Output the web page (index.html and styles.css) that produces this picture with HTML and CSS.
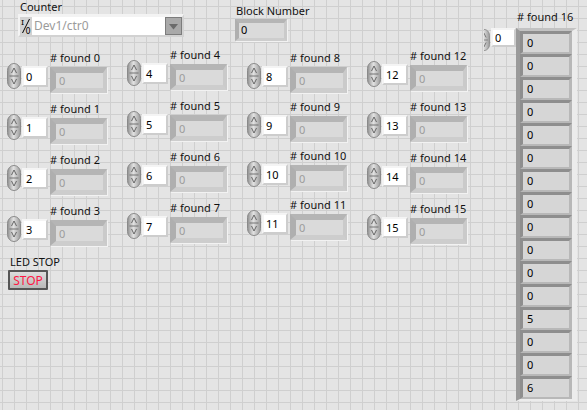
FILE: index.html
```html
<!DOCTYPE html>
<html>
<head>
<meta charset="utf-8">
<title>Front Panel</title>
<link rel="stylesheet" href="styles.css">
</head>
<body>
<svg class="defs" width="0" height="0">
  <defs>
    <linearGradient id="spg" x1="0" y1="0" x2="1" y2="0">
      <stop offset="0" stop-color="#8f8f8f"/>
      <stop offset="0.45" stop-color="#e2e2e2"/>
      <stop offset="1" stop-color="#9a9a9a"/>
    </linearGradient>
    <symbol id="spin" viewBox="0 0 14 26">
      <rect x="0.5" y="0.5" width="13" height="25" rx="6.5" ry="7" fill="url(#spg)" stroke="#8a8a8a"/>
      <polyline points="4.5,10 7,5 9.5,10" fill="none" stroke="#5a5a5a" stroke-width="0.9"/>
      <line x1="2.5" y1="13" x2="11.5" y2="13" stroke="#6a6a6a" stroke-width="0.9"/>
      <polyline points="4.5,16 7,21 9.5,16" fill="none" stroke="#5a5a5a" stroke-width="0.9"/>
    </symbol>
  </defs>
</svg>
<div class="panel">
  <div class="left">
    <div class="top">
      <div class="counter">
        <div class="lbl counter-lbl">Counter</div>
        <div class="ioctl">
          <div class="io-icon">
            <svg width="12" height="18" viewBox="0 0 12 18">
              <text x="1" y="8" class="io-i">I</text>
              <line x1="9.5" y1="2" x2="2.5" y2="16" stroke="#000" stroke-width="1"/>
              <text x="5.5" y="16.5" class="io-o">0</text>
            </svg>
          </div>
          <div class="io-field">Dev1/ctr0</div>
          <div class="io-drop">
            <svg width="13" height="13" viewBox="0 0 13 13"><polygon points="2,4 11,4 6.5,9.5" fill="#6b6b6b"/></svg>
          </div>
        </div>
      </div>
      <div class="block">
        <div class="lbl">Block Number</div>
        <div class="ind ind-small">0</div>
      </div>
    </div>

    <div class="cluster">
      <div class="col c1">
        <div class="unit"><div class="ctl"><svg class="spin"><use href="#spin"/></svg><div class="num">0</div></div><div class="indw"><div class="lbl"># found 0</div><div class="ind">0</div></div></div>
        <div class="unit"><div class="ctl"><svg class="spin"><use href="#spin"/></svg><div class="num">1</div></div><div class="indw"><div class="lbl"># found 1</div><div class="ind">0</div></div></div>
        <div class="unit"><div class="ctl"><svg class="spin"><use href="#spin"/></svg><div class="num">2</div></div><div class="indw"><div class="lbl"># found 2</div><div class="ind">0</div></div></div>
        <div class="unit"><div class="ctl"><svg class="spin"><use href="#spin"/></svg><div class="num">3</div></div><div class="indw"><div class="lbl"># found 3</div><div class="ind">0</div></div></div>
      </div>
      <div class="col c2">
        <div class="unit"><div class="ctl"><svg class="spin"><use href="#spin"/></svg><div class="num">4</div></div><div class="indw"><div class="lbl"># found 4</div><div class="ind">0</div></div></div>
        <div class="unit"><div class="ctl"><svg class="spin"><use href="#spin"/></svg><div class="num">5</div></div><div class="indw"><div class="lbl"># found 5</div><div class="ind">0</div></div></div>
        <div class="unit"><div class="ctl"><svg class="spin"><use href="#spin"/></svg><div class="num">6</div></div><div class="indw"><div class="lbl"># found 6</div><div class="ind">0</div></div></div>
        <div class="unit"><div class="ctl"><svg class="spin"><use href="#spin"/></svg><div class="num">7</div></div><div class="indw"><div class="lbl"># found 7</div><div class="ind">0</div></div></div>
      </div>
      <div class="col c3">
        <div class="unit"><div class="ctl"><svg class="spin"><use href="#spin"/></svg><div class="num">8</div></div><div class="indw"><div class="lbl"># found 8</div><div class="ind">0</div></div></div>
        <div class="unit"><div class="ctl"><svg class="spin"><use href="#spin"/></svg><div class="num">9</div></div><div class="indw"><div class="lbl"># found 9</div><div class="ind">0</div></div></div>
        <div class="unit"><div class="ctl"><svg class="spin"><use href="#spin"/></svg><div class="num">10</div></div><div class="indw"><div class="lbl"># found 10</div><div class="ind">0</div></div></div>
        <div class="unit"><div class="ctl"><svg class="spin"><use href="#spin"/></svg><div class="num">11</div></div><div class="indw"><div class="lbl"># found 11</div><div class="ind">0</div></div></div>
      </div>
      <div class="col c4">
        <div class="unit"><div class="ctl"><svg class="spin"><use href="#spin"/></svg><div class="num">12</div></div><div class="indw"><div class="lbl"># found 12</div><div class="ind">0</div></div></div>
        <div class="unit"><div class="ctl"><svg class="spin"><use href="#spin"/></svg><div class="num">13</div></div><div class="indw"><div class="lbl"># found 13</div><div class="ind">0</div></div></div>
        <div class="unit"><div class="ctl"><svg class="spin"><use href="#spin"/></svg><div class="num">14</div></div><div class="indw"><div class="lbl"># found 14</div><div class="ind">0</div></div></div>
        <div class="unit"><div class="ctl"><svg class="spin"><use href="#spin"/></svg><div class="num">15</div></div><div class="indw"><div class="lbl"># found 15</div><div class="ind">0</div></div></div>
      </div>
    </div>

    <div class="led">
      <div class="lbl led-lbl">LED STOP</div>
      <button class="stop">STOP</button>
    </div>
  </div>

  <div class="right">
    <div class="lbl arr-lbl"># found 16</div>
    <div class="arow">
      <div class="idx">
        <svg class="spin idx-spin"><use href="#spin"/></svg>
        <div class="num idx-num">0</div>
      </div>
      <div class="array">
        <div class="el">0</div>
        <div class="el">0</div>
        <div class="el">0</div>
        <div class="el">0</div>
        <div class="el">0</div>
        <div class="el">0</div>
        <div class="el">0</div>
        <div class="el">0</div>
        <div class="el">0</div>
        <div class="el">0</div>
        <div class="el">0</div>
        <div class="el">0</div>
        <div class="el">5</div>
        <div class="el">0</div>
        <div class="el">0</div>
        <div class="el">6</div>
      </div>
    </div>
  </div>
</div>
</body>
</html>
```

FILE: styles.css
```css
* { box-sizing: border-box; }
html, body { margin: 0; padding: 0; }
body {
  width: 587px;
  height: 410px;
  overflow: hidden;
  font-family: "Noto Sans", "DejaVu Sans", sans-serif;
  font-size: 11px;
  color: #000;
}
.defs { position: absolute; width: 0; height: 0; overflow: hidden; }

.panel {
  width: 587px;
  height: 410px;
  display: flex;
  background-color: #e4e4e4;
  background-image:
    linear-gradient(to right, #cfcfcf 1px, transparent 1px),
    linear-gradient(to bottom, #cfcfcf 1px, transparent 1px);
  background-size: 12px 12px;
  background-position: 2px 6px;
}

.lbl {
  font-size: 11px;
  line-height: 13px;
  height: 13px;
  white-space: nowrap;
  color: #111;
}

.left { width: 480px; display: flex; flex-direction: column; }

/* top row */
.top { height: 40px; display: flex; align-items: flex-start; }
.counter { margin-left: 18px; display: flex; flex-direction: column; }
.counter-lbl { margin-left: 2px; }
.ioctl {
  margin-top: 1px;
  width: 166px;
  height: 23px;
  display: flex;
  border-style: solid;
  border-width: 3px 2px 2px 2px;
  border-color: #f3f3f3 #d2d2d2 #d2d2d2 #f3f3f3;
}
.io-icon { width: 12px; background: #d2d2d2; }
.io-icon svg { display: block; }
.io-i { font-family: "DejaVu Serif", serif; font-size: 8px; fill: #000; }
.io-o { font-family: "DejaVu Sans", sans-serif; font-size: 8px; fill: #000; }
.io-field {
  flex: 1;
  background: #fff;
  color: #9b9b9b;
  font-size: 12px;
  line-height: 18px;
  padding-left: 2px;
  white-space: nowrap;
}
.io-drop {
  width: 17px;
  background: #a9a9a9;
  border: 1px solid #7c7c7c;
  display: flex;
  align-items: center;
  justify-content: center;
}
.block { margin-left: 51px; padding-top: 4px; display: flex; flex-direction: column; }
.block .lbl { margin-left: 1px; }

/* indicators */
.ind {
  width: 57px;
  height: 26px;
  border-style: solid;
  border-width: 6px 4px 5px 6px;
  border-color: #b5b5b5 #cacaca #cdcdcd #afafaf;
  background: #dadada;
  color: #9c9c9c;
  font-size: 11px;
  line-height: 14px;
  padding: 1px 0 0 3px;
  box-shadow: 1px 1px 0 #f2f2f2;
}
.ind-small {
  margin-top: 2px;
  width: 52px;
  height: 22px;
  border-width: 4px 3px 3px 4px;
  color: #000;
  padding: 0 0 0 2px;
}

/* cluster of controls */
.cluster {
  display: grid;
  grid-template-columns: repeat(4, 120px);
  margin-left: 7px;
  height: 215px;
}
.col { display: flex; flex-direction: column; }
.c1 { padding-top: 11px; gap: 2px; }
.c2 { padding-top: 8px; gap: 2px; }
.c3 { padding-top: 11px; gap: 0; }
.c4 { padding-top: 9px; gap: 2px; }
.unit { height: 49px; display: flex; align-items: flex-start; }
.ctl { margin-top: 12px; display: flex; align-items: flex-start; }
.spin { width: 14px; height: 26px; display: block; flex: none; }
.num {
  margin-left: 1px;
  margin-top: 3px;
  width: 26px;
  height: 21px;
  border-style: solid;
  border-width: 2px;
  border-color: #f4f4f4 #cdcdcd #cdcdcd #f4f4f4;
  background: #fff;
  background-clip: padding-box;
  font-size: 11px;
  line-height: 16px;
  padding: 1px 0 0 2px;
}
.indw { margin-left: 2px; display: flex; flex-direction: column; }
.indw .ind { margin-top: 3px; }

/* LED STOP */
.led { margin-left: 8px; display: flex; flex-direction: column; align-items: flex-start; }
.led-lbl { margin-left: 2px; }
.stop {
  margin-top: 2px;
  width: 40px;
  height: 20px;
  padding: 0;
  border: 2px solid #555;
  border-radius: 1px;
  background: linear-gradient(#dcdcdc, #b8b8b8);
  color: #ff1744;
  font-family: "Noto Sans", "DejaVu Sans", sans-serif;
  font-size: 12px;
  line-height: 15px;
}

/* array */
.right { width: 107px; padding-top: 10px; display: flex; flex-direction: column; }
.arr-lbl { margin-left: 37px; }
.arow { margin-top: 5px; display: flex; align-items: flex-start; }
.idx { margin-left: 4px; width: 32px; height: 26px; overflow: hidden; display: flex; align-items: flex-start; flex: none; }
.idx-spin { margin-left: -7px; width: 14px; height: 22px; margin-top: 1px; }
.idx-num { margin-left: 0; margin-top: 0; width: 25px; height: 19px; line-height: 14px; }
.array {
  border-style: solid;
  border-width: 3px 5px 2px 4px;
  border-color: #c2c2c2 #ececec #ececec #9a9a9a;
  display: flex;
  flex-direction: column;
}
.el {
  width: 52px;
  height: 23px;
  border-style: solid;
  border-width: 3px 3px 2px 3px;
  border-color: #8e8e8e #b8b8b8 #b8b8b8 #8e8e8e;
  background: #d6d6d6;
  font-size: 11px;
  line-height: 16px;
  padding: 1px 0 0 4px;
}
```
